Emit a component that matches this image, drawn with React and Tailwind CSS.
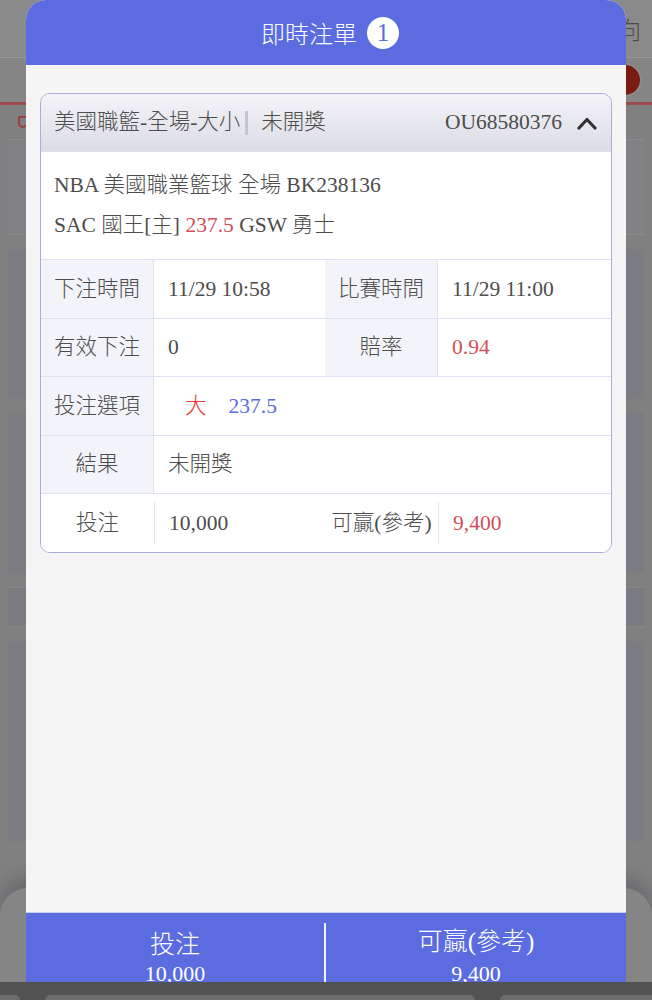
const serif = "font-['Liberation_Serif','Noto_Sans_CJK_TC',serif]";

function Row({ children, last }) {
  return (
    <div
      className={
        "flex h-[58.6px] border-t border-[#dfe1f1] " + (last ? "bg-white py-[8px]" : "")
      }
    >
      {children}
    </div>
  );
}

function Label({ children, plain }) {
  return (
    <div
      className={
        "flex w-[113px] flex-none items-center justify-center " +
        (plain ? "" : "border-r border-[#dfe1f1] bg-[#f3f4fa]")
      }
    >
      {children}
    </div>
  );
}

function Value({ children, wide, line }) {
  return (
    <div
      className={
        "flex items-center pl-[14px] " +
        (wide ? "flex-1 " : "w-[171px] flex-none ") +
        (line ? "border-l border-[#dfe1f1]" : "")
      }
    >
      {children}
    </div>
  );
}

function BackgroundPage() {
  return (
    <div className="flex h-full flex-col">
      <div className="flex h-[58px] items-center justify-end border-b border-[#979797] bg-[#8a8a8a] pr-[11px] text-[24px] font-light text-[#4a4a4a]">
        向
      </div>
      <div className="flex h-[44px] items-center justify-end bg-[#858585] pr-[10px]">
        <div className="h-[34px] w-[34px] rounded-full border-2 border-[#8c8c8c] bg-[#7a1b12]" />
      </div>
      <div className="h-[3px] bg-[#9d4a4a]" />
      <div className="flex h-[34px] items-center px-[18px]">
        <div className="h-[12px] w-[10px] rounded-b-[5px] border-2 border-[#9a4040]" />
      </div>
      <div className="flex flex-col gap-[14px] px-[8px]">
        <div className="h-[96px] border-y border-[#8a8a8a] bg-[#828286]" />
        <div className="h-[150px] bg-[#7b7c81]" />
        <div className="h-[160px] bg-[#7b7c81]" />
        <div className="h-[40px] border-y border-[#868686] bg-[#7a7b80]" />
        <div className="h-[200px] bg-[#7b7c81]" />
      </div>
      <div className="mt-auto h-[112px] rounded-t-[28px] bg-[#858585] shadow-[0_-10px_18px_rgba(40,40,60,0.25)]" />
    </div>
  );
}

export default function App() {
  return (
    <div className="relative h-[1000px] w-[652px] overflow-hidden bg-[#808080] font-['Noto_Sans_CJK_TC',sans-serif]">
      <BackgroundPage />

      <div className="absolute left-[26px] top-0 flex h-[1000px] w-[600px] flex-col overflow-hidden rounded-t-[20px] bg-[#f5f5f5] font-light">
        <div className="flex h-[65px] flex-none items-center justify-center gap-[10px] bg-[#5b6ce1] pl-[8px]">
          <span className="text-[24px] text-white">即時注單</span>
          <span
            className={
              "flex h-[32px] w-[32px] items-center justify-center rounded-full bg-white text-[25px] leading-none text-[#5b6ce1] " +
              serif
            }
          >
            1
          </span>
        </div>

        <div className={"flex-1 px-[14px] pt-[28px] text-[21.5px] text-[#4d4d4d] " + serif}>
          <div className="overflow-hidden rounded-[10px] border-[1.5px] border-[#a9adda]">
            <div className="flex h-[57px] items-center justify-between bg-linear-to-b from-[#f4f4f8] to-[#dbdce6] pl-[13px] pr-[14px]">
              <div className="flex items-center">
                <span>美國職籃-全場-大小</span>
                <span className="ml-[5px] mr-[13px] h-[24px] w-[3px] bg-[#c4c4ca]" />
                <span>未開獎</span>
              </div>
              <div className="flex items-center gap-[15px]">
                <span>OU68580376</span>
                <svg width="20" height="14" viewBox="0 0 20 14">
                  <path
                    d="M2 12 L10 3.5 L18 12"
                    fill="none"
                    stroke="#333"
                    strokeWidth="3.2"
                    strokeLinecap="round"
                    strokeLinejoin="round"
                  />
                </svg>
              </div>
            </div>

            <div className="border-t border-[#dfe1f1] bg-white px-[13px] pb-[14px] pt-[13px] leading-[40px]">
              <div>NBA 美國職業籃球 全場 BK238136</div>
              <div>
                SAC 國王[主] <span className="text-[#cf4f5b]">237.5</span> GSW 勇士
              </div>
            </div>

            <div className="bg-white">
              <Row>
                <Label>下注時間</Label>
                <Value>11/29 10:58</Value>
                <Label>比賽時間</Label>
                <Value wide>11/29 11:00</Value>
              </Row>
              <Row>
                <Label>有效下注</Label>
                <Value>0</Value>
                <Label>賠率</Label>
                <Value wide>
                  <span className="text-[#cf4f5b]">0.94</span>
                </Value>
              </Row>
              <Row>
                <Label>投注選項</Label>
                <div className="flex flex-1 items-center gap-[22px] pl-[31px]">
                  <span className="text-[#e8392e]">大</span>
                  <span className="text-[#5b6ce1]">237.5</span>
                </div>
              </Row>
              <Row>
                <Label>結果</Label>
                <Value wide>未開獎</Value>
              </Row>
              <Row last>
                <Label plain>投注</Label>
                <Value line>10,000</Value>
                <Label plain>可贏(參考)</Label>
                <Value wide line>
                  <span className="text-[#cf4f5b]">9,400</span>
                </Value>
              </Row>
            </div>
          </div>
        </div>

        <div className="flex h-[88px] flex-none border-t border-[#c9cdf0] bg-[#5b6ce1] text-white">
          <div className="flex w-[298px] flex-col items-center pt-[12px]">
            <span className="text-[25px] leading-[34px]">投注</span>
            <span className={"text-[22px] leading-[30px] " + serif}>10,000</span>
          </div>
          <div className="mt-[10px] w-[2px] bg-white/90" />
          <div className="flex flex-1 flex-col items-center pt-[12px]">
            <span className={"text-[25px] leading-[34px] " + serif}>可贏(參考)</span>
            <span className={"text-[22px] leading-[30px] " + serif}>9,400</span>
          </div>
        </div>
      </div>

      <div className="absolute bottom-0 left-0 flex h-[18px] w-full items-end gap-[25px] bg-[#525252]">
        <div className="h-[5px] w-[20px] rounded-tr-[8px] bg-[#6c6c6c]" />
        <div className="h-[5px] w-[430px] rounded-t-[10px] bg-[#6c6c6c]" />
        <div className="h-[5px] flex-1 rounded-tl-[10px] bg-[#6c6c6c]" />
      </div>
    </div>
  );
}
